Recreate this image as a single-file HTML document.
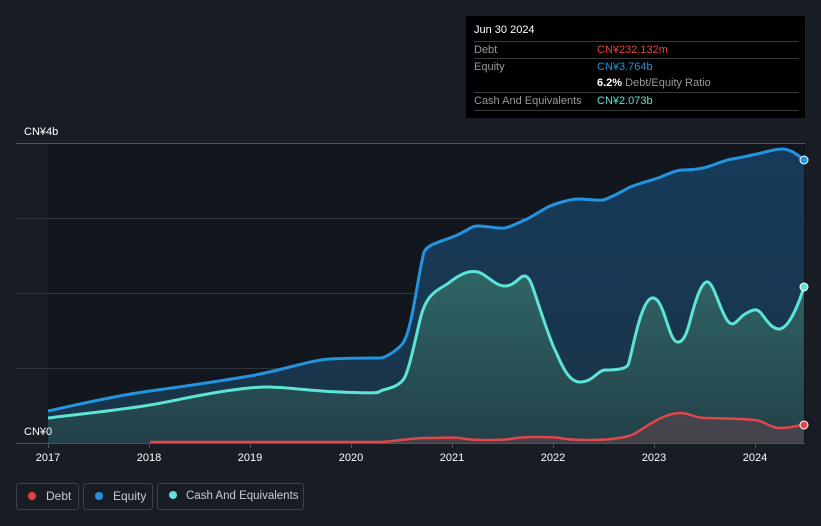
<!DOCTYPE html>
<html><head><style>
html,body{margin:0;width:821px;height:526px;overflow:hidden}
body{background:#181c25;font-family:"Liberation Sans",sans-serif;position:relative}
.tt{position:absolute;left:466px;top:16px;width:339px;height:102px;background:#000;color:#fff;font-size:11px}
.row{position:absolute;left:8px;width:325px;border-top:1px solid #3a3a3a;height:17px;line-height:17px}
.row span.l{color:#9a9a9a;position:absolute;left:0}
.row span.v{position:absolute;left:123px}
.leg{position:absolute;top:483px;height:27px;border:1px solid #3c424b;border-radius:3px;color:#c8ccd2;font-size:12px;line-height:25px;box-sizing:border-box;white-space:nowrap;overflow:hidden}
.dot{display:inline-block;width:8px;height:8px;border-radius:50%;margin:0 10px 0 11px;vertical-align:0px}
</style></head><body>
<svg width="821" height="526" style="position:absolute;left:0;top:0">
<defs>
<linearGradient id="ge" x1="0" y1="0" x2="0" y2="1"><stop offset="0" stop-color="#163a5a"/><stop offset="1" stop-color="#1a3447"/></linearGradient>
<linearGradient id="gc" x1="0" y1="0" x2="0" y2="1"><stop offset="0" stop-color="#2f6565"/><stop offset="1" stop-color="#234049"/></linearGradient>
</defs>
<rect x="48" y="143" width="757" height="300" fill="#12161d"/>
<g stroke="#2e343d" stroke-width="1">
<line x1="16" y1="143.5" x2="805" y2="143.5" stroke="#50555c"/>
<line x1="16" y1="218.5" x2="805" y2="218.5"/>
<line x1="16" y1="293.5" x2="805" y2="293.5"/>
<line x1="16" y1="368.5" x2="805" y2="368.5"/>
</g>
<path d="M48,411 C80,404 120,395 150,391 S220,381 250,376 S310,360 330,359 S375,358 380,358 S398,350 403,343 C412,330 417,280 424,252 C428,244 440,242 455,236 S470,226 478,226 S500,229 505,228 S520,222 525,220 S545,208 550,206 S570,199 578,199 S598,201 603,200 S625,190 628,188 S652,180 658,178 S675,170 682,170 S700,169 707,167 S725,160 732,159 S752,155 757,154 S775,149 782,149 S796,153 804,160 L804,443 L48,443Z" fill="url(#ge)"/>
<path d="M48,418 C80,414 120,410 150,405 S200,394 240,389 S290,390 340,392 S375,392 383,390 S398,386 403,380 S413,350 420,320 S440,290 450,282 S470,270 478,272 S495,286 505,286 S520,275 525,276 S532,285 537,300 S550,340 555,350 S567,382 580,382 S598,370 605,370 S625,370 628,365 S640,300 652,298 S668,340 677,342 S690,320 693,310 S702,280 708,282 S720,310 727,320 S738,318 745,314 S756,308 760,312 S770,328 778,329 S795,315 804,287 L804,443 L48,443Z" fill="url(#gc)"/>
<path d="M48,411 C80,404 120,395 150,391 S220,381 250,376 S310,360 330,359 S375,358 380,358 S398,350 403,343 C412,330 417,280 424,252 C428,244 440,242 455,236 S470,226 478,226 S500,229 505,228 S520,222 525,220 S545,208 550,206 S570,199 578,199 S598,201 603,200 S625,190 628,188 S652,180 658,178 S675,170 682,170 S700,169 707,167 S725,160 732,159 S752,155 757,154 S775,149 782,149 S796,153 804,160" fill="none" stroke="#2394e0" stroke-width="3"/>
<path d="M48,418 C80,414 120,410 150,405 S200,394 240,389 S290,390 340,392 S375,392 383,390 S398,386 403,380 S413,350 420,320 S440,290 450,282 S470,270 478,272 S495,286 505,286 S520,275 525,276 S532,285 537,300 S550,340 555,350 S567,382 580,382 S598,370 605,370 S625,370 628,365 S640,300 652,298 S668,340 677,342 S690,320 693,310 S702,280 708,282 S720,310 727,320 S738,318 745,314 S756,308 760,312 S770,328 778,329 S795,315 804,287" fill="none" stroke="#5ee4d4" stroke-width="3"/>
<path d="M150,442 L380,442 C400,441 410,438 425,438 S455,437 460,438 S475,440 485,440 S505,440 510,439 S525,437 535,437 S555,437 560,438 S575,440 590,440 S615,439 625,437 S640,430 650,424 S670,413 680,413 S695,418 705,418 S745,419 755,420 S770,428 780,428 S795,426 804,425 L804,443 L150,443Z" fill="#e0474c" fill-opacity="0.18"/>
<path d="M150,442 L380,442 C400,441 410,438 425,438 S455,437 460,438 S475,440 485,440 S505,440 510,439 S525,437 535,437 S555,437 560,438 S575,440 590,440 S615,439 625,437 S640,430 650,424 S670,413 680,413 S695,418 705,418 S745,419 755,420 S770,428 780,428 S795,426 804,425" fill="none" stroke="#e0474c" stroke-width="2.5"/>
<line x1="16" y1="443.5" x2="805" y2="443.5" stroke="#50555c"/>
<g stroke="#50555c"><line x1="48.5" y1="443" x2="48.5" y2="448"/><line x1="149.5" y1="443" x2="149.5" y2="448"/><line x1="250.5" y1="443" x2="250.5" y2="448"/><line x1="351.5" y1="443" x2="351.5" y2="448"/><line x1="452.5" y1="443" x2="452.5" y2="448"/><line x1="553.5" y1="443" x2="553.5" y2="448"/><line x1="654.5" y1="443" x2="654.5" y2="448"/><line x1="755.5" y1="443" x2="755.5" y2="448"/></g>
<circle cx="804" cy="160" r="4" fill="#2394e0" stroke="#fff" stroke-width="1"/>
<circle cx="804" cy="287" r="4" fill="#5ee4d4" stroke="#fff" stroke-width="1"/>
<circle cx="804" cy="425" r="4" fill="#e0474c" stroke="#fff" stroke-width="1"/>
<g fill="#fff" font-size="11" font-family="Liberation Sans, Noto Sans CJK SC, sans-serif">
<text x="24" y="135">CN¥4b</text><text x="24" y="435">CN¥0</text>
</g>
<g fill="#fff" font-size="11" text-anchor="middle" font-family="Liberation Sans, sans-serif">
<text x="48" y="461">2017</text><text x="149" y="461">2018</text><text x="250" y="461">2019</text><text x="351" y="461">2020</text><text x="452" y="461">2021</text><text x="553" y="461">2022</text><text x="654" y="461">2023</text><text x="755" y="461">2024</text>
</g>
</svg>
<div class="tt">
<div style="position:absolute;left:8px;top:8px;font-size:11px">Jun 30 2024</div>
<div class="row" style="top:25px"><span class="l">Debt</span><span class="v" style="color:#e8403f">CN¥232.132m</span></div>
<div class="row" style="top:42px"><span class="l">Equity</span><span class="v" style="color:#2394e0">CN¥3.764b</span></div>
<div style="position:absolute;left:131px;top:60px;line-height:15px"><b>6.2%</b> <span style="color:#9a9a9a">Debt/Equity Ratio</span></div>
<div class="row" style="top:76px;border-bottom:1px solid #3a3a3a"><span class="l">Cash And Equivalents</span><span class="v" style="color:#5ee4d4">CN¥2.073b</span></div>
</div>
<div class="leg" style="left:16px;width:63px"><span class="dot" style="background:#e8403f"></span>Debt</div>
<div class="leg" style="left:83px;width:70px"><span class="dot" style="background:#2394e0"></span>Equity</div>
<div class="leg" style="left:157px;width:147px;font-size:11.5px"><span class="dot" style="background:#5ee4d4;margin-right:9px"></span>Cash And Equivalents</div>
</body></html>
